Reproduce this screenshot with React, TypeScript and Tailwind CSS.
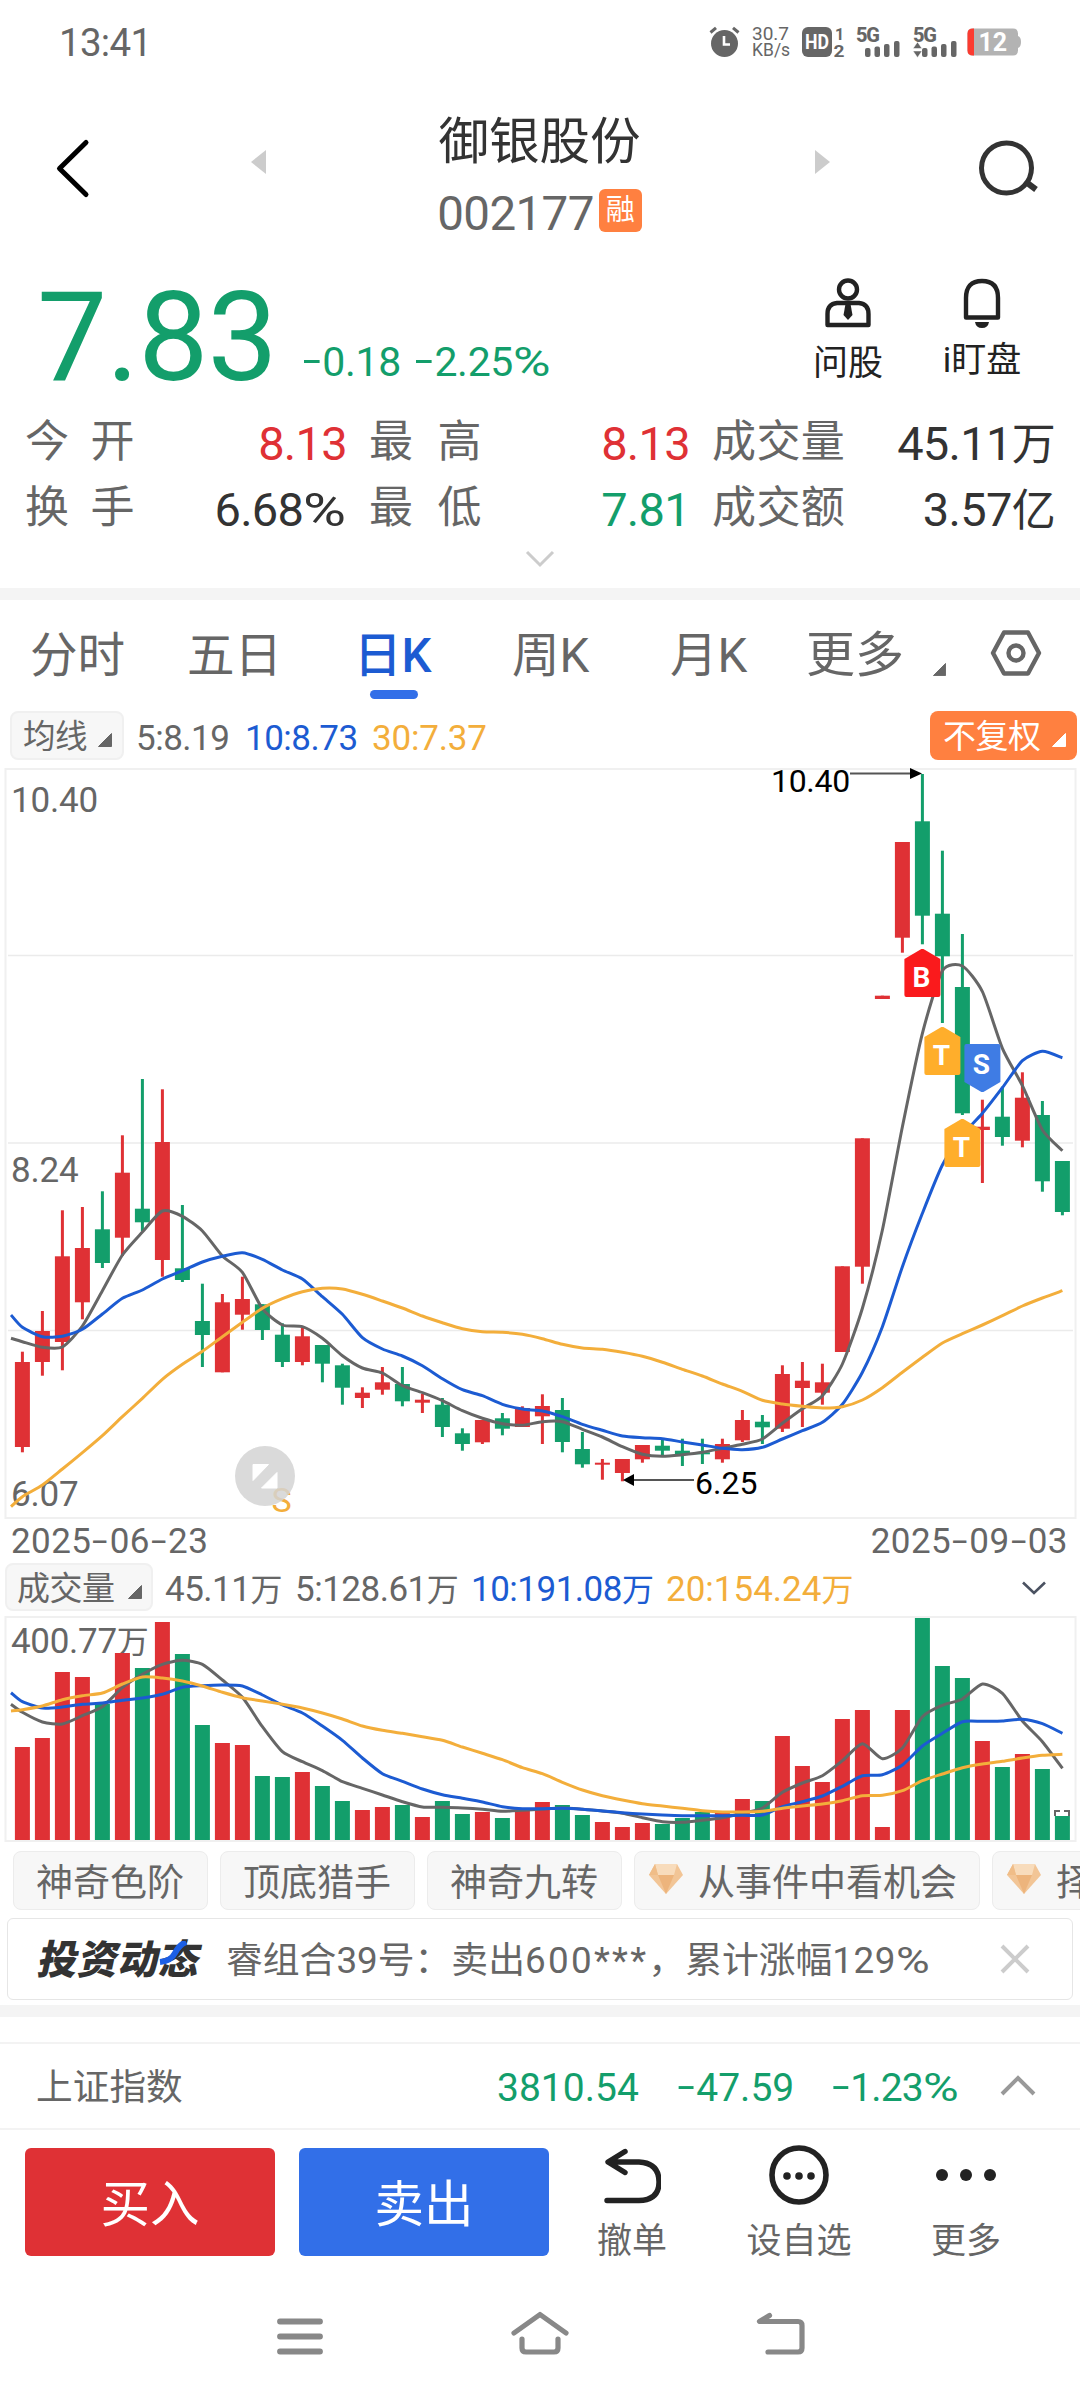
import type { ReactNode } from 'react'

const C = {
  red: '#DF3135', green: '#139E6B', gray: '#666666', blue: '#1C5BD2', yellow: '#F3AE3B',
  grid: '#F0F0F0', dark: '#222222', nav: '#888888',
}

// [high, bodyTop, bodyBottom, low, up?, volumeTop]
type Candle = [number, number, number, number, 0 | 1, number]

const CANDLES: Candle[] = [
  [583.7, 594, 679, 684.3, 1, 131], [543, 563, 594, 607.7, 1, 122], [442.3, 488.3, 574, 602.3, 1, 56],
  [439, 480, 534.3, 551.3, 1, 61], [423.3, 461.3, 495, 500, 0, 88], [367.3, 404.7, 469.7, 488, 1, 37],
  [311, 440.7, 454.3, 463, 0, 52], [321.3, 374, 492, 508.7, 1, 6], [437, 500.3, 512, 514, 0, 38],
  [515.7, 553, 567, 599, 0, 109], [526, 534.3, 604.3, 604.3, 1, 127], [508.7, 531, 546.7, 561.7, 1, 129],
  [536.3, 536.3, 562, 572, 0, 160], [555.3, 566.7, 594, 599, 0, 161], [560, 568.3, 594, 597.3, 1, 156],
  [577, 577, 595.7, 614.3, 0, 170], [595.7, 597.3, 619.7, 636.7, 0, 185], [619.3, 624.7, 630, 640, 1, 194],
  [599, 614.3, 621.7, 626.7, 1, 191], [599, 616, 633.3, 638.3, 0, 189], [626, 631.7, 634.7, 645, 1, 201],
  [630, 636.7, 659, 669, 0, 185], [660.3, 665.3, 676, 682.7, 0, 198], [652, 652, 674.3, 676, 1, 196],
  [645, 650.3, 660.7, 667.3, 0, 202], [638.3, 640, 659, 659, 1, 195], [626.3, 638, 648.3, 676, 1, 186],
  [630, 642, 674, 684.3, 0, 189], [664, 681, 696.3, 699.7, 0, 199], [691, 694.7, 696.7, 711.7, 1, 206],
  [691, 691, 705, 713.3, 1, 211], [677, 677, 691.3, 694.7, 1, 207], [671, 677.7, 682.7, 688.7, 0, 208],
  [670.7, 682.7, 686, 698, 0, 202], [670.7, 684.3, 686.3, 696, 0, 196], [670.7, 676, 691.3, 694.7, 1, 197],
  [642, 652, 672.3, 674, 1, 183], [647, 653.7, 659.3, 676, 0, 185], [597.3, 606, 660.7, 664, 1, 120],
  [594, 612.7, 620, 659, 1, 150], [595.7, 614.3, 624.7, 636.7, 1, 166], [498.3, 498.3, 584, 584, 1, 103],
  [370.3, 370.3, 498.7, 515.7, 1, 94], [227.7, 227.7, 231, 231, 1, 211], [74, 74, 169.7, 184.7, 1, 94],
  [6, 53.3, 147.7, 176.3, 0, 2], [82.7, 145.7, 188.3, 255, 0, 50], [166, 219, 345.3, 347, 0, 62],
  [331.7, 358.7, 362, 415, 1, 125], [318.7, 348.7, 369, 377.7, 0, 151], [304.3, 329.7, 372.7, 379.3, 1, 138],
  [333, 347, 413.3, 423.7, 0, 153], [393, 393, 444, 447.3, 0, 200],
]

const MA5 = [570.3, 573.7, 579.3, 579, 558, 522.7, 487, 464, 443, 448.3, 463, 488, 504.3, 540.7, 557, 558.7, 570.3, 587.7, 600, 605, 617.7, 624.7, 632.7, 642.7, 650.3, 655.7, 657.3, 653.7, 653.7, 661.3, 669, 678.7, 686.3, 688.3, 686.7, 684.3, 680.3, 676.3, 671, 655.3, 640.7, 627.7, 596, 540.3, 462, 358.7, 265.3, 202.7, 198, 223.7, 280.3, 317.7, 362, 382.7]
const MA10 = [547, 559.3, 568.7, 568.3, 561.3, 546, 530.3, 522, 511, 502.7, 494, 488.3, 484.7, 491.3, 502, 511, 528.7, 546.3, 569.7, 581, 588, 597.7, 610.7, 621.7, 627.7, 636.3, 641, 643, 648.7, 656.3, 662.3, 668, 669.7, 670.7, 674, 677, 680.3, 681.7, 679.3, 671, 662.7, 654.3, 636.3, 604.3, 558.7, 498.7, 445.3, 397, 367, 345.3, 319.7, 292.7, 283.3, 289.7]
const MA30 = [738.7, 728.7, 717, 701, 684.7, 667.7, 648.7, 630.3, 611.3, 596.3, 583.3, 568.7, 554.3, 540.3, 530.7, 523.7, 520.3, 521, 526.3, 533, 540, 548, 554.7, 560.7, 563.7, 564.3, 566.3, 570.7, 576.3, 580, 581.3, 584.3, 588.3, 594.3, 601.3, 608, 616, 623.3, 632.3, 636, 638.3, 640, 638.7, 632, 619.7, 604.3, 589.3, 575, 565.7, 557, 547.7, 538, 530, 522.7]
const VOL5 = [88.3, 96.3, 106, 108, 99.7, 90.7, 71.7, 58.3, 48.3, 44.3, 48.3, 64, 81.3, 110.7, 135.7, 145.7, 154.7, 165.7, 172.3, 179, 185.7, 191, 191.3, 192, 193.3, 195.3, 194.3, 193, 192, 193.3, 195, 197.3, 201.7, 205.7, 206.3, 204.3, 201.7, 197.3, 192, 176.3, 167, 159.7, 144.7, 127.7, 142.7, 132, 100.7, 89.3, 83, 68, 77.3, 105, 125.7, 152.3]
const VOL10 = [76.7, 85.7, 92, 91, 88.3, 87, 84.3, 82, 78.3, 71.3, 69.7, 69, 70, 79, 89, 97, 110, 124.3, 142, 157.7, 165.3, 173, 178.7, 182.3, 186, 190.7, 192.7, 192.7, 192.3, 193.3, 195, 196.7, 198, 199, 199.7, 199.7, 199.7, 199.3, 199, 190.7, 185.7, 180, 170.3, 159.7, 158.7, 149, 130, 117.3, 105.7, 105.3, 105, 103.3, 107.7, 117.3]
const VOL20 = [95, 93.7, 90, 83.7, 79.7, 77, 68, 61, 62, 65, 70, 76.3, 81.7, 85, 88.3, 92, 97, 103, 110, 114.3, 117.3, 120.7, 124.3, 131, 137.3, 143.7, 151.7, 157.7, 166.3, 174, 179.7, 184, 187.7, 190, 192.3, 194.7, 196, 196, 195.3, 192.3, 190, 188, 184.7, 179.7, 179.3, 174.7, 164.7, 158, 151.7, 148, 145.3, 142, 139.3, 138.3]

const cx = (i: number) => 22.4 + i * 20

// the first value of every average sits on the left edge, half a slot before candle 0
function curve(values: number[]) {
  const p = values.map((y, i) => [i === 0 ? 11 : cx(i - 1), y])
  let d = `M${p[0][0]} ${p[0][1]}`
  for (let i = 0; i < p.length - 1; i++) {
    const a = p[Math.max(i - 1, 0)], b = p[i], c = p[i + 1], e = p[Math.min(i + 2, p.length - 1)]
    const k = 9
    d += `C${b[0] + (c[0] - a[0]) / k} ${b[1] + (c[1] - a[1]) / k} ${c[0] - (e[0] - b[0]) / k} ${c[1] - (e[1] - b[1]) / k} ${c[0]} ${c[1]}`
  }
  return d
}

function Line({ values, color }: { values: number[]; color: string }) {
  return <path d={curve(values)} fill="none" stroke={color} strokeWidth="3" strokeLinejoin="round" />
}

// wide minus and percent signs around tabular digits
function Num({ children }: { children: string }) {
  return (
    <>
      {children.split(/([-%])/).map((part, i) => {
        if (part === '-') return <span key={i} className="inline-block w-[0.52em] origin-center -translate-y-[0.04em] scale-x-[1.6] text-center">-</span>
        if (part === '%') return <span key={i} className="inline-block w-[0.93em] origin-left scale-x-[1.25] text-left">%</span>
        return part
      })}
    </>
  )
}

function Marker({ x, y, label, fill, down }: { x: number; y: number; label: string; fill: string; down?: boolean }) {
  const d = down
    ? 'M-16 0H16Q18 0 18 2V38L1 48H-1L-18 38V2Q-18 0 -16 0Z'
    : 'M-1 0H1L18 10V46Q18 48 16 48H-16Q-18 48 -18 46V10Z'
  return (
    <g transform={`translate(${x} ${y})`}>
      <path d={d} fill={fill} />
      <text x="-1" y={down ? 30 : 37.5} textAnchor="middle" fontSize="28" fontWeight="700" fill="#fff">{label}</text>
    </g>
  )
}

function KChart() {
  return (
    <svg width="1080" height="752" viewBox="0 0 1080 752" className="block shrink-0">
      <rect x="5.5" y="1" width="1070" height="749" fill="none" stroke={C.grid} strokeWidth="2" />
      {[187.5, 375, 562.5].map((y) => <line key={y} x1="8" x2="1073" y1={y} y2={y} stroke="#EBEBEB" strokeWidth="1.5" />)}
      {CANDLES.map(([hi, top, bot, lo, up], i) => (
        <g key={i} fill={up ? C.red : C.green}>
          <rect x={cx(i) - 1.5} y={hi} width="3" height={lo - hi} />
          <rect x={cx(i) - 7.5} y={top} width="15" height={bot - top} />
        </g>
      ))}
      <g fontSize="35" fill={C.gray} letterSpacing="-0.2">
        <text x="11" y="44">10.40</text>
        <text x="11" y="413.5">8.24</text>
        <text x="11" y="737.5">6.07</text>
      </g>
      <Line values={MA5} color={C.gray} />
      <Line values={MA10} color={C.blue} />
      <Line values={MA30} color={C.yellow} />
      <g fontSize="32" fill="#000">
        <text x="771" y="24" letterSpacing="-0.3">10.40</text>
        <path d="M850 5.5H912" stroke="#555" strokeWidth="1.8" />
        <path d="M910 0L922 5.5L910 11Z" />
        <text x="695" y="726">6.25</text>
        <path d="M634 712H694" stroke="#555" strokeWidth="1.8" />
        <path d="M634 706V718L623 712Z" />
      </g>
      <Marker x={922.4} y={181} label="B" fill="#FA1A1C" />
      <Marker x={942.4} y={259} label="T" fill="#FFAE2B" />
      <Marker x={982.4} y={276} label="S" fill="#3F7CE4" down />
      <Marker x={962.4} y={351} label="T" fill="#FFAE2B" />
      <text x="271.5" y="744" fontSize="34" fill={C.yellow}>S</text>
      <circle cx="265" cy="708" r="30" fill="#D3D3D3" fillOpacity="0.85" />
      <path d="M253 696.5H268.5L253 712.5ZM277 704.5V720H261.5Z" fill="#fff" stroke="#fff" strokeWidth="1" strokeLinejoin="round" />
    </svg>
  )
}

function VolumeChart() {
  return (
    <svg width="1080" height="226" viewBox="0 0 1080 226" className="block shrink-0">
      <rect x="5.5" y="1" width="1070" height="224" fill="none" stroke={C.grid} strokeWidth="2" />
      <text x="11" y="37" fontSize="35" fill={C.gray} letterSpacing="-0.3">400.77<tspan fontSize="32">万</tspan></text>
      {CANDLES.map(([, , , , up, top], i) => (
        <rect key={i} x={cx(i) - 7.5} y={top} width="15" height={224 - top} fill={up ? C.red : C.green} />
      ))}
      <path d="M1055 200V195H1060M1069 200V195H1064" fill="none" stroke={C.gray} strokeWidth="2" />
      <Line values={VOL5} color={C.gray} />
      <Line values={VOL10} color={C.blue} />
      <Line values={VOL20} color={C.yellow} />
    </svg>
  )
}

function Bars({ className = '' }: { className?: string }) {
  return (
    <svg width="42" height="32" viewBox="0 0 42 32" className={'overflow-visible ' + className} fill={C.gray}>
      <text x="0" y="15.500" fontSize="20" fontWeight="800" textLength="24">5G</text>
      <rect x="9" y="22" width="5.500" height="9" rx="2" />
      <rect x="18.500" y="20.500" width="5.500" height="10.500" rx="2" />
      <rect x="28" y="18" width="5.500" height="13" rx="2" />
      <rect x="38" y="15" width="5.500" height="16" rx="2" />
    </svg>
  )
}

function StatusBar() {
  return (
    <div className="flex h-[84px] items-center justify-between pl-[59px] pr-[59px] text-[#666]">
      <span className="pt-[2px] text-[38.500px] leading-none tracking-[-0.700px]">13:41</span>
      <div className="flex items-center">
        <svg width="31" height="32" viewBox="0 0 31 32">
          <circle cx="15.500" cy="17.500" r="13.500" fill={C.gray} />
          <path d="M1.500 6.500L7 1.800M29.500 6.500L24 1.800" stroke={C.gray} strokeWidth="3" />
          <path d="M15 10V18.500H21" fill="none" stroke="#fff" strokeWidth="2.600" />
        </svg>
        <div className="ml-[12px] flex w-[39px] flex-col text-[19px] leading-[17px]">
          <span>30.7</span>
          <span className="text-[17.500px]">KB/s</span>
        </div>
        <svg width="43" height="32" viewBox="0 0 43 32" className="ml-[11px] overflow-visible">
          <rect x="0" y="1" width="30" height="30" rx="6" fill={C.gray} />
          <text x="3" y="23" fontSize="20" fontWeight="700" fill="#fff" textLength="24" lengthAdjust="spacingAndGlyphs">HD</text>
          <text x="33" y="13.500" fontSize="16" fontWeight="700" fill={C.gray}>1</text>
          <text x="31.500" y="30.500" fontSize="17" fontWeight="700" fill={C.gray} textLength="11" lengthAdjust="spacingAndGlyphs">2</text>
        </svg>
        <Bars className="ml-[11px]" />
        <div className="relative ml-[15px]">
          <Bars />
          <svg width="10" height="16" viewBox="0 0 10 16" className="absolute left-0 top-[16px]">
            <path d="M0 6.500L4.500 0L9 6.500ZM0 9L4.500 15.500L9 9Z" fill={C.gray} stroke="#fff" strokeWidth="0.500" />
          </svg>
        </div>
        <svg width="54" height="28" viewBox="0 0 54 28" className="ml-[12px]">
          <path d="M6 0.500H46Q51 0.500 51 5.500V8Q54 9 54 14Q54 19 51 20V22.500Q51 27.500 46 27.500H6Q0.500 27.500 0.500 22.500V5.500Q0.500 0.500 6 0.500Z" fill="#B3B3B3" />
          <path d="M6 0.500H7V27.500H6Q0.500 27.500 0.500 22.500V5.500Q0.500 0.500 6 0.500Z" fill="#FB3B30" />
          <text x="11.500" y="23" fontSize="25" fontWeight="700" fill="#fff">12</text>
        </svg>
      </div>
    </div>
  )
}

function Header() {
  return (
    <header className="flex h-[176px] px-[43px]">
      <svg width="60" height="80" viewBox="0 0 60 80" className="mt-[44px] shrink-0">
        <path d="M43 14.500L16.500 40.500L43 66.500" fill="none" stroke="#000" strokeWidth="5" strokeLinecap="round" strokeLinejoin="round" />
      </svg>
      <svg width="15" height="24" viewBox="0 0 15 24" className="ml-[148px] mt-[66px] shrink-0">
        <path d="M15 0V24L0 12Z" fill="#CCC" />
      </svg>
      <div className="flex flex-1 flex-col items-center pr-[2px] pt-[32px]">
        <h1 className="text-[50.500px] font-normal leading-[52px] text-[#333]">御银股份</h1>
        <div className="mt-[20px] flex items-center">
          <span className="pt-[3px] text-[47.500px] leading-[46px] tracking-[-0.600px] text-[#666]">002177</span>
          <span className="mb-[4px] ml-[5px] flex h-[43px] w-[43px] items-center justify-center rounded-md bg-[#ff8040] text-[29px] leading-none text-white">融</span>
        </div>
      </div>
      <svg width="15" height="24" viewBox="0 0 15 24" className="mt-[66px] shrink-0">
        <path d="M0 0V24L15 12Z" fill="#CCC" />
      </svg>
      <svg width="64" height="64" viewBox="0 0 64 64" className="ml-[144px] mr-[-1px] mt-[52px] shrink-0">
        <circle cx="32.500" cy="32" r="25" fill="none" stroke="#333" strokeWidth="5" />
        <path d="M52 46L62 53.500" stroke="#333" strokeWidth="6" />
      </svg>
    </header>
  )
}

function Quote() {
  return (
    <section className="flex h-[160px] pl-[37px] pr-[58px]">
      <div className="mt-[14px] w-[264px] text-[125px] leading-[128px] tracking-[-1px] text-[#139e6b]">7.83</div>
      <div className="mt-[78px] flex-1 whitespace-nowrap text-[41px] leading-[48px] tracking-[-0.300px] text-[#139e6b]">
        <span><Num>-0.18</Num></span>
        <span className="ml-[12px]"><Num>-2.25%</Num></span>
      </div>
      <div className="mt-[18px] flex w-[80px] flex-col items-center text-[#222]">
        <svg width="46" height="50" viewBox="0 0 46 50">
          <circle cx="23" cy="11.500" r="9" fill="none" stroke={C.dark} strokeWidth="4.400" />
          <path d="M12 25H34Q43.500 26 43.500 36V47H2.500V36Q2.500 26 12 25Z" fill="none" stroke={C.dark} strokeWidth="4.400" strokeLinejoin="round" />
          <path d="M20.500 26H25.500L27.500 37L23 42L18.500 37Z" fill={C.dark} />
        </svg>
        <span className="mt-[16px] text-[35px] leading-[40px]">问股</span>
      </div>
      <div className="ml-[54px] mt-[18px] flex w-[80px] flex-col items-center whitespace-nowrap text-[#222]">
        <svg width="40" height="50" viewBox="0 0 40 50">
          <path d="M4 39.500V20Q4 3 20 3Q36 3 36 20V39.500Z" fill="none" stroke={C.dark} strokeWidth="4.400" strokeLinejoin="round" />
          <path d="M13 44H27Q26 50 20 50Q14 50 13 44Z" fill={C.dark} />
        </svg>
        <span className="mt-[13px] text-[35px] leading-[40px]">i盯盘</span>
      </div>
    </section>
  )
}

const STATS = [
  [['今', '开', '8.13', 'text-[#df3135]'], ['最', '高', '8.13', 'text-[#df3135]'], ['成交量', '', '45.11', 'text-[#333]', '万']],
  [['换', '手', '6.68%', 'text-[#333]'], ['最', '低', '7.81', 'text-[#139e6b]'], ['成交额', '', '3.57', 'text-[#333]', '亿']],
]

function Stats() {
  return (
    <section className="-mt-[10px] h-[178px] shrink-0">
      {STATS.map((row, r) => (
        <div key={r} className="flex h-[66px] items-center pl-[25px] text-[44px] leading-none text-[#666]">
          {row.map(([a, b, value, color, unit], i) => (
            <div key={i} className={['w-[322px] mr-[22px]', 'w-[321px] mr-[22px]', 'w-[343px]'][i] + ' flex items-center justify-between whitespace-nowrap'}>
              <span className="pb-[2px] tracking-[0.400px]">{a}{b && <span className={i === 0 ? 'ml-[21px]' : 'ml-[24px]'}>{b}</span>}</span>
              <span className={'text-[47px] tracking-[-0.700px] ' + color}><Num>{value}</Num>{unit && <span className="text-[44px]">{unit}</span>}</span>
            </div>
          ))}
        </div>
      ))}
      <svg width="30" height="18" viewBox="0 0 30 18" className="mx-auto mt-[8px] block">
        <path d="M2 2L15 15L28 2" fill="none" stroke="#CCC" strokeWidth="3" />
      </svg>
    </section>
  )
}

function Tri({ size = 14, className = '' }: { size?: number; className?: string }) {
  return (
    <svg width={size} height={size} viewBox="0 0 14 14" className={'shrink-0 ' + className}>
      <path d="M13.500 0.500V13.500H0.500Z" fill="currentColor" stroke="currentColor" strokeLinejoin="round" />
    </svg>
  )
}

function Tabs() {
  return (
    <nav className="flex h-[104px] items-start pl-[30px] pt-[28px] text-[47.500px] leading-[56px] text-[#666]">
      <span className="w-[157px]">分时</span>
      <span className="w-[167px]">五日</span>
      <span className="flex w-[158px] flex-col font-medium text-[#1c5bd2]">
        日K
        <span className="ml-[16px] mt-[6px] h-[9px] w-[48px] rounded-full bg-[#326fe8]" />
      </span>
      <span className="w-[158px]">周K</span>
      <span className="w-[136px]">月K</span>
      <span className="w-[127px] text-[49px]">更多</span>
      <Tri size={13} className="mt-[35px]" />
      <svg width="52" height="46" viewBox="0 0 52 46" className="ml-[44px] mt-[2px]">
        <path d="M14 2.500H38L49 23L38 43.500H14L3 23Z" fill="none" stroke={C.gray} strokeWidth="4.400" strokeLinejoin="round" />
        <circle cx="26" cy="23" r="7.500" fill="none" stroke={C.gray} strokeWidth="4.400" />
      </svg>
    </nav>
  )
}

function MaRow() {
  return (
    <div className="flex h-[64px] items-start pl-[10px] pr-[3px] pt-[7px] text-[35px] leading-[48px] tracking-[-0.500px] text-[#666]">
      <span className="flex h-[49px] w-[114px] items-center rounded-lg border-2 border-[#f0f0f0] bg-[#f7f7f7] pl-[11px] pt-[2px] text-[32.500px]">
        均线<Tri className="ml-[11px] mt-[7px]" />
      </span>
      <span className="ml-[12px] w-[109px] pt-[4px]">5:8.19</span>
      <span className="w-[127px] pt-[4px] text-[#1c5bd2]">10:8.73</span>
      <span className="flex-1 pt-[4px] tracking-[-0.200px] text-[#f3ae3b]">30:7.37</span>
      <span className="flex h-[49px] w-[147px] items-center rounded-lg bg-[#ff8040] pl-[13px] pt-[2px] text-[33px] text-white">
        不复权<Tri className="ml-[11px] mt-[7px]" />
      </span>
    </div>
  )
}

function Wan() {
  return <span className="text-[32px]">万</span>
}

function VolumeRow() {
  return (
    <div className="flex h-[54px] items-start pl-[5px] pt-[1px] text-[35px] leading-[54px] tracking-[-0.500px]">
      <span className="flex h-[48px] w-[148px] items-center rounded-lg border-2 border-[#f0f0f0] bg-[#f7f7f7] pl-[10px] pt-[4px] text-[33px] text-[#666]">
        成交量<Tri className="ml-[13px] mt-[6px]" />
      </span>
      <span className="ml-[12px] w-[130px] text-[#666]">45.11<Wan /></span>
      <span className="w-[176px] text-[#666]">5:128.61<Wan /></span>
      <span className="w-[195px] text-[#1c5bd2]">10:191.08<Wan /></span>
      <span className="flex-1 tracking-normal text-[#f3ae3b]">20:154.24<Wan /></span>
      <svg width="24" height="14" viewBox="0 0 24 14" className="mr-[34px] mt-[18px]">
        <path d="M1 1.500L12 12L23 1.500" fill="none" stroke="#4B5261" strokeWidth="2.600" />
      </svg>
    </div>
  )
}

function Gem() {
  return (
    <svg width="34" height="30" viewBox="0 0 34 30" className="-mt-[8px] mr-[15px] shrink-0">
      <path d="M6 0H28L34 11L17 30L0 11Z" fill="#F2C596" />
      <path d="M6 0H28L25 11H9Z" fill="#F8DCBC" />
      <path d="M9 11H25L17 30Z" fill="#EDB47C" />
      <path d="M0 11L6 0L9 11Z" fill="#F0BD88" />
    </svg>
  )
}

function Chip({ children, className }: { children: ReactNode; className: string }) {
  return (
    <span className={'flex h-[59px] shrink-0 items-center whitespace-nowrap rounded-lg border border-[#ececec] bg-[#f7f7f7] pt-[5px] text-[37px] leading-none text-[#666] ' + className}>
      {children}
    </span>
  )
}

function Action({ icon, label, className }: { icon: ReactNode; label: string; className: string }) {
  return (
    <div className={'flex flex-col items-center text-[35px] leading-[40px] text-[#666] ' + className}>
      {icon}
      <span className="mt-[17px]">{label}</span>
    </div>
  )
}

export default function App() {
  return (
    <div className="flex h-[2400px] w-[1080px] flex-col overflow-hidden bg-white font-[Roboto,'Noto_Sans_CJK_SC',sans-serif]">
      <StatusBar />
      <Header />
      <Quote />
      <Stats />
      <div className="h-[12px] shrink-0 bg-[#f4f4f4]" />
      <Tabs />
      <MaRow />
      <KChart />
      <div className="flex h-[42px] shrink-0 items-center justify-between pl-[11px] pr-[12px] text-[35px] leading-none tracking-[0.450px] text-[#666]">
        <span><Num>2025-06-23</Num></span>
        <span><Num>2025-09-03</Num></span>
      </div>
      <VolumeRow />
      <VolumeChart />
      <div className="flex h-[76px] shrink-0 gap-[12px] overflow-hidden pl-[13px] pt-[9px]">
        <Chip className="w-[195px] pl-[22px]">神奇色阶</Chip>
        <Chip className="w-[195px] pl-[22px]">顶底猎手</Chip>
        <Chip className="w-[195px] pl-[22px]">神奇九转</Chip>
        <Chip className="w-[346px] pl-[14px]"><Gem />从事件中看机会</Chip>
        <Chip className="w-[346px] pl-[14px]"><Gem />择时</Chip>
      </div>
      <div className="mx-[7px] flex h-[82px] shrink-0 items-center rounded-md border-[1.500px] border-[#e6e6e6] pl-[31px] text-[36.800px] leading-none text-[#666]">
        <div className="relative w-[187px]">
          <span className="inline-block -skew-x-12 pt-[3px] text-[40px] font-black tracking-[0.500px] text-[#333]">投资动态</span>
          <svg width="32" height="26" viewBox="0 0 32 26" className="absolute left-[119px] top-[3px]">
            <path d="M2 21Q13 20 17 12T28 1" fill="none" stroke="#1C5FE5" strokeWidth="6" />
          </svg>
        </div>
        <span className="flex-1 whitespace-nowrap pt-[4px]">睿组合39号：卖出<span className="tracking-[2.300px]">600***</span>，累计涨幅<span className="tracking-[0.500px]"><Num>129%</Num></span></span>
        <svg width="30" height="30" viewBox="0 0 30 30" className="mr-[42px]">
          <path d="M2 2L28 28M28 2L2 28" stroke="#CCC" strokeWidth="4" />
        </svg>
      </div>
      <div className="mt-[5px] h-[12px] shrink-0 bg-[#f4f4f4]" />
      <div className="mt-[25px] flex h-[88px] shrink-0 items-center border-y-2 border-[#f3f3f3] pl-[36px] text-[39px] leading-none text-[#139e6b]">
        <span className="flex-1 pt-[4px] text-[36.700px] text-[#666]">上证指数</span>
        <span className="w-[179px] pt-[4px]">3810.54</span>
        <span className="w-[154px] pt-[4px]"><Num>-47.59</Num></span>
        <span className="w-[170px] pt-[4px] tracking-[-0.900px]"><Num>-1.23%</Num></span>
        <svg width="36" height="22" viewBox="0 0 36 22" className="mr-[44px]">
          <path d="M2 19L18 3L34 19" fill="none" stroke="#999" strokeWidth="4" />
        </svg>
      </div>
      <div className="flex h-[150px] shrink-0 pl-[25px] pt-[18px]">
        <button className="h-[108px] w-[250px] rounded-md bg-[#df3135] pt-[8px] text-[49.500px] leading-none text-white">买入</button>
        <button className="ml-[24px] h-[108px] w-[250px] rounded-md bg-[#326fe8] pt-[8px] text-[49.500px] leading-none text-white">卖出</button>
        <Action
          className="ml-[43px] mt-[-3px] w-[80px]"
          label="撤单"
          icon={
            <svg width="58" height="60" viewBox="0 0 58 60">
              <path d="M22 6.500L5 17L22 27.500M6 17H36Q56 18 56 37Q56 55 36 55.500H4" fill="none" stroke={C.dark} strokeWidth="5.400" strokeLinejoin="round" strokeLinecap="round" />
            </svg>
          }
        />
        <Action
          className="ml-[72px] mt-[-3px] w-[110px]"
          label="设自选"
          icon={
            <svg width="60" height="60" viewBox="0 0 60 60">
              <circle cx="30" cy="30" r="27" fill="none" stroke={C.dark} strokeWidth="5.600" />
              {[18, 30, 42].map((x) => <circle key={x} cx={x} cy="31" r="3.800" fill={C.dark} />)}
            </svg>
          }
        />
        <Action
          className="ml-[67px] mt-[-3px] w-[90px]"
          label="更多"
          icon={
            <svg width="62" height="60" viewBox="0 0 62 60">
              {[7, 31, 55].map((x) => <circle key={x} cx={x} cy="30" r="6" fill={C.dark} />)}
            </svg>
          }
        />
      </div>
      <div className="flex flex-1 items-start pl-[277px] pt-[30px]">
        <svg width="46" height="50" viewBox="0 0 46 50">
          <path d="M3 11.500H43M3 26.500H43M3 41.500H43" stroke={C.nav} strokeWidth="5.800" strokeLinecap="round" />
        </svg>
        <svg width="60" height="50" viewBox="0 0 60 50" className="ml-[187px]">
          <path d="M4 23L30 4.500L56 23M12 29V38Q12 42 16 42H44Q48 42 48 38V29" fill="none" stroke={C.nav} strokeWidth="5.200" strokeLinecap="round" strokeLinejoin="round" />
        </svg>
        <svg width="50" height="50" viewBox="0 0 50 50" className="ml-[186px]">
          <path d="M13.500 5.500L3.500 11.500H42Q46 11.500 46 15.500V38Q46 42 42 42H12" fill="none" stroke={C.nav} strokeWidth="5.200" strokeLinecap="round" strokeLinejoin="round" />
        </svg>
      </div>
    </div>
  )
}
